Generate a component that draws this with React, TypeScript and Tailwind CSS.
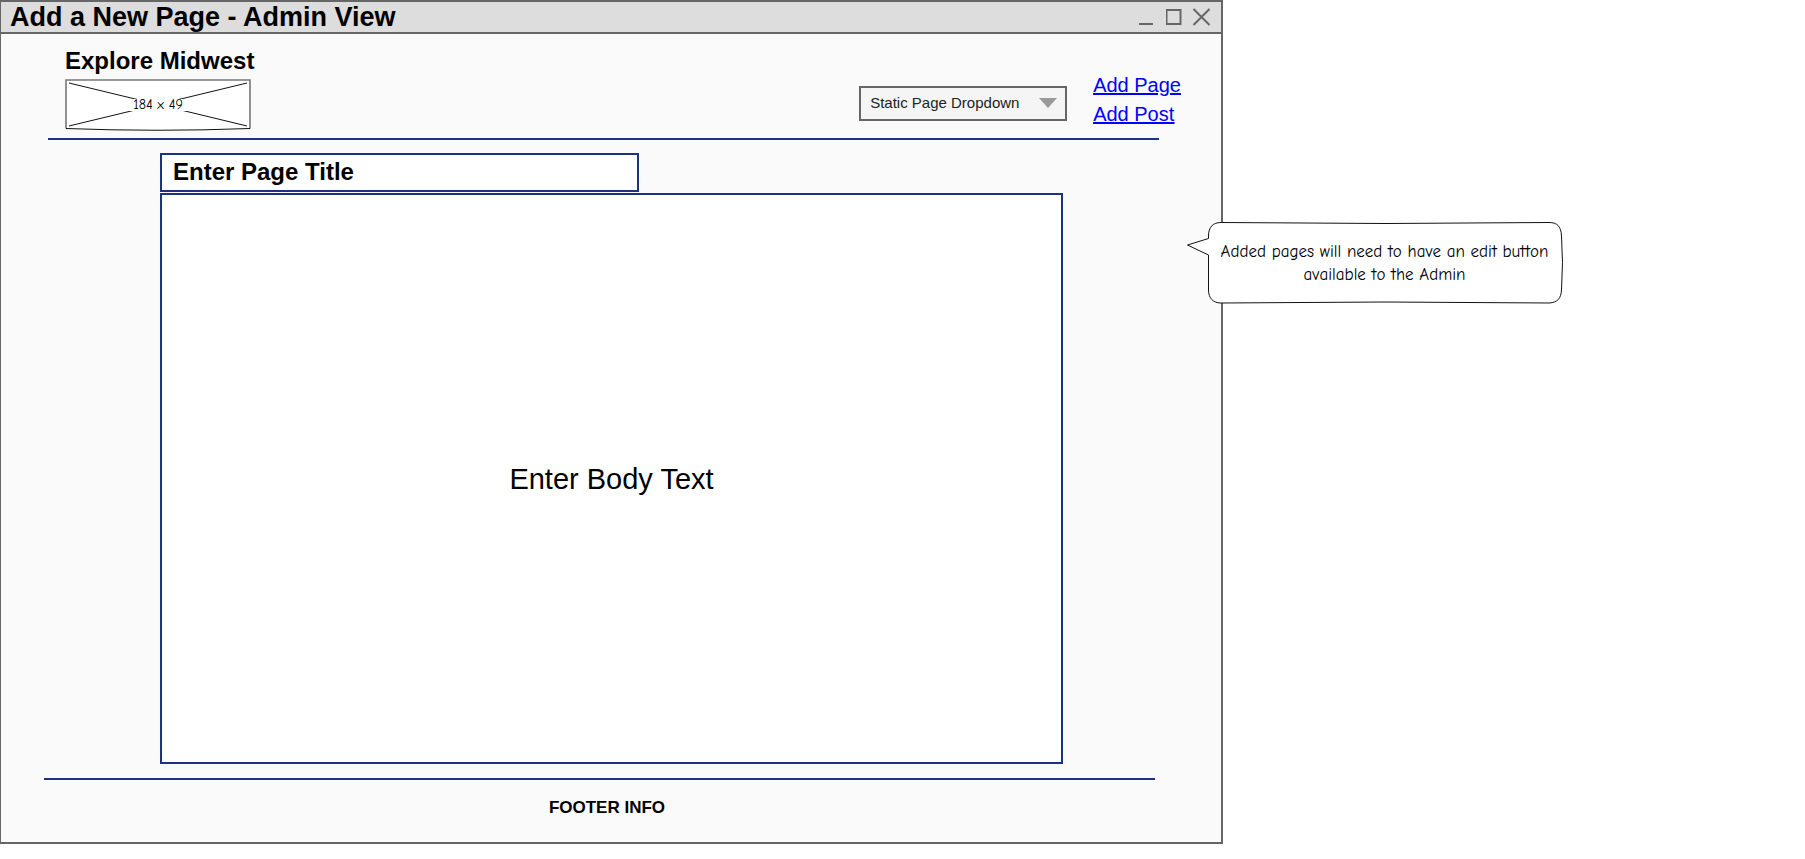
import React from "react";

function TitleBar() {
  return (
    <div className="flex h-8 items-center justify-between border-b-2 border-[#666666] bg-[#dddddd] pl-[9px] pr-[11px]">
      <h1 className="text-[27px] leading-8 font-bold">Add a New Page - Admin View</h1>
      <div className="flex items-center gap-3 text-[#666666]">
        <button type="button" aria-label="Minimize" className="h-4 w-4">
          <svg viewBox="0 0 16 16" className="h-4 w-4" aria-hidden="true">
            <path d="M1 15H15" stroke="currentColor" strokeWidth="2" />
          </svg>
        </button>
        <button type="button" aria-label="Maximize" className="h-4 w-4">
          <svg viewBox="0 0 16 16" className="h-4 w-4" aria-hidden="true">
            <rect x="0.5" y="1" width="14" height="14" fill="none" stroke="currentColor" strokeWidth="2" />
          </svg>
        </button>
        <button type="button" aria-label="Close" className="h-4 w-4">
          <svg viewBox="0 0 16 16" className="h-4 w-4 overflow-visible" aria-hidden="true">
            <path d="M-0.5 0L15.500 16M15.500 0L-0.5 16" stroke="currentColor" strokeWidth="2" />
          </svg>
        </button>
      </div>
    </div>
  );
}

function LogoPlaceholder() {
  return (
    <div className="relative flex h-[51px] w-[186px] items-center justify-center">
      <svg viewBox="0 0 186 51" className="absolute inset-0 h-full w-full overflow-visible" aria-hidden="true">
        <path d="M1 1H185V49.5Q93 53 1 49.5Z" fill="#ffffff" />
        <path d="M1 49.5V1H185V49.5" fill="none" stroke="#777777" strokeWidth="1.6" />
        <path d="M1 49.5Q93 53 185 49.5" fill="none" stroke="#111111" strokeWidth="1" />
        <path d="M4 4L182 47M4 47L182 4" stroke="#111111" strokeWidth="1" />
      </svg>
      <span className="relative bg-white px-1 font-['Comic_Neue','Lato',sans-serif] text-sm leading-3">
        184 x 49
      </span>
    </div>
  );
}

function Header() {
  return (
    <header className="flex items-end justify-between pt-[11px] pr-10 pb-2 pl-16">
      <div className="flex flex-col gap-[2px]">
        <h2 className="text-2xl font-bold">Explore Midwest</h2>
        <LogoPlaceholder />
      </div>
      <div className="flex items-end gap-[26px] pb-px">
        <div className="relative mb-2">
          <select
            aria-label="Static pages"
            className="h-[35px] w-52 appearance-none border-2 border-[#666666] bg-[#f5f5f5] pr-10 pl-[9px] text-[15px] text-[#222222]"
          >
            <option>Static Page Dropdown</option>
          </select>
          <svg
            viewBox="0 0 18 10"
            className="pointer-events-none absolute top-3 right-[10px] h-[10px] w-[18px]"
            aria-hidden="true"
          >
            <path d="M0 0H18L9 10Z" fill="#999999" />
          </svg>
        </div>
        <nav className="flex flex-col text-xl leading-[29px] text-[#0000ff] underline decoration-2 underline-offset-1">
          <a href="#add-page">Add Page</a>
          <a href="#add-post">Add Post</a>
        </nav>
      </div>
    </header>
  );
}

function PageForm() {
  return (
    <form className="mr-[158px] ml-[159px] flex flex-col gap-px pt-[13px]">
      <input
        type="text"
        aria-label="Page title"
        placeholder="Enter Page Title"
        className="h-[39px] w-[53%] border-2 border-[#1a3380] bg-white px-[11px] pb-[2px] text-2xl font-bold placeholder:text-black placeholder:opacity-100"
      />
      <textarea
        aria-label="Body text"
        placeholder="Enter Body Text"
        className="block h-[571px] w-full resize-none border-2 border-[#1a3380] bg-white pt-[266px] text-center text-[29px] leading-[36px] placeholder:text-black placeholder:opacity-100"
      />
    </form>
  );
}

function Note() {
  return (
    <aside className="absolute top-[220px] left-full -ml-[34px] h-[82px] w-[376px]">
      <svg viewBox="0 0 376 82" className="absolute inset-0 h-full w-full overflow-visible" aria-hidden="true">
        <path
          d="M34 0.5Q198 2.5 362 0.5C370 0.5 374 4 374.500 14Q376.500 40 374.500 68C374 76 371 80.500 362 81Q198 79 34 81C26 81 21.500 76 21.500 68V33L0.500 23L21.500 16.500V14C21.500 5 26 0.500 34 0.500Z"
          fill="#ffffff"
          stroke="#111111"
          strokeWidth="1"
        />
      </svg>
      <p className="relative flex flex-col pt-[18px] pl-[19px] text-center font-['Comic_Neue','Lato',sans-serif] text-[17px] leading-[23px] whitespace-nowrap [font-kerning:none]">
        <span>Added pages will need to have an edit button</span>
        <span>available to the Admin</span>
      </p>
    </aside>
  );
}

export default function App() {
  return (
    <div className="min-h-screen bg-white font-['Liberation_Sans',Arial,sans-serif] text-black">
      <div className="relative w-full max-w-[1223px] border-t-2 border-r-2 border-b-2 border-l border-[#666666] bg-[#fafafa]">
        <TitleBar />
        <Header />
        <hr className="mr-[62px] ml-[47px] border-t-2 border-[#1a3380]" />
        <PageForm />
        <hr className="mt-[14px] mr-[66px] ml-[43px] border-t-2 border-[#1a3380]" />
        <footer className="pt-4 pr-2 pb-[22px] text-center text-[17px] leading-6 font-bold">FOOTER INFO</footer>
        <Note />
      </div>
    </div>
  );
}
